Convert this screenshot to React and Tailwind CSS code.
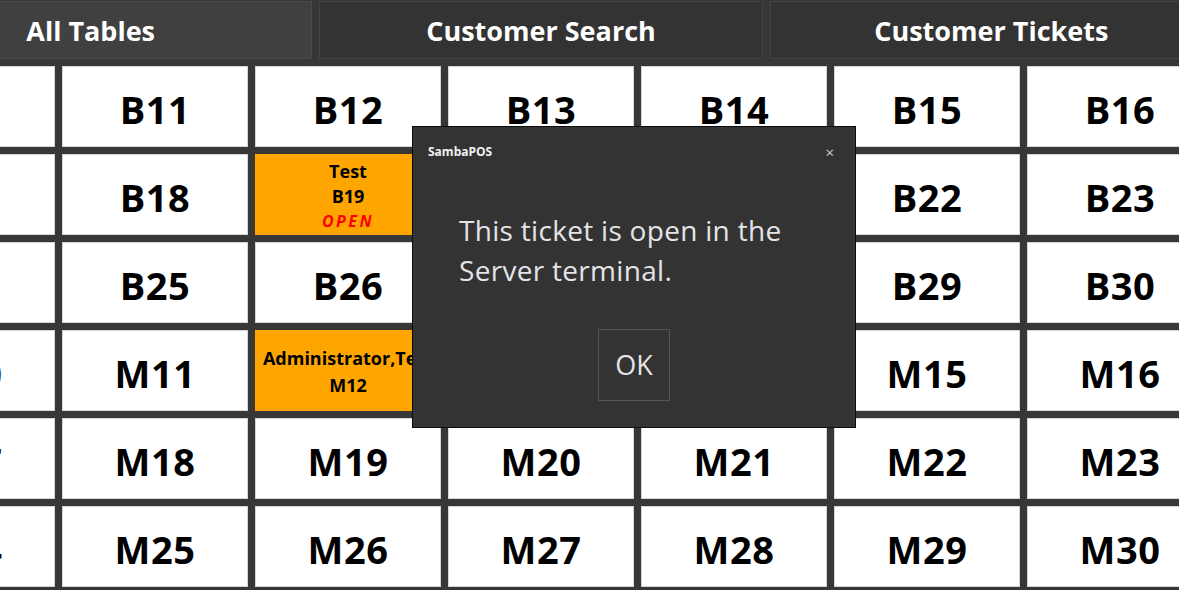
import React from "react";

const rows = [
  ["B10", "B11", "B12", "B13", "B14", "B15", "B16"],
  ["B17", "B18", "B19", "B20", "B21", "B22", "B23"],
  ["B24", "B25", "B26", "B27", "B28", "B29", "B30"],
  ["M10", "M11", "M12", "M13", "M14", "M15", "M16"],
  ["M17", "M18", "M19", "M20", "M21", "M22", "M23"],
  ["M24", "M25", "M26", "M27", "M28", "M29", "M30"],
];

const font = { fontFamily: '"Open Sans", "Noto Sans", sans-serif' };

function Cell({ name }) {
  if (name === "B19") {
    return (
      <div className="h-[81px] bg-[#ffa500] flex flex-col items-center justify-center text-black font-bold leading-[25px] pt-[4px]">
        <div className="text-[18px]">Test</div>
        <div className="text-[18px]">B19</div>
        <div className="text-[16px] italic text-[#ff0000] tracking-[2.5px]">OPEN</div>
      </div>
    );
  }
  if (name === "M12") {
    return (
      <div className="h-[81px] bg-[#ffa500] flex flex-col items-center justify-center text-black font-bold leading-[27px] overflow-hidden whitespace-nowrap pt-[2px]">
        <div className="text-[18px]">Administrator,Test</div>
        <div className="text-[18px]">M12</div>
      </div>
    );
  }
  return (
    <div className="h-[81px] bg-white border border-[#d6d6d6] flex items-center justify-center overflow-hidden whitespace-nowrap">
      <span className="text-[38px] font-bold text-black leading-none pt-[4px] tracking-[0.5px]">{name}</span>
    </div>
  );
}

export default function App() {
  return (
    <div className="relative w-[1179px] h-[590px] overflow-hidden bg-[#373737]" style={font}>
      <div className="ml-[-131px] w-[1344px]">
        <div className="grid grid-cols-3 gap-[7px] pt-px">
          <div className="h-[58px] bg-[#404040] border border-[#4b4b4b] flex items-center justify-center text-white font-bold text-[27px] pt-[3px]">
            All Tables
          </div>
          <div className="h-[58px] bg-[#333333] border border-[#444444] flex items-center justify-center text-white font-bold text-[27px] pt-[3px]">
            Customer Search
          </div>
          <div className="h-[58px] bg-[#333333] border border-[#444444] flex items-center justify-center text-white font-bold text-[27px] pt-[3px]">
            Customer Tickets
          </div>
        </div>
        <div className="grid grid-cols-7 gap-[7px] mt-[7px]">
          {rows.flat().map((n) => (
            <Cell key={n} name={n} />
          ))}
        </div>
      </div>

      <div className="absolute left-[412px] top-[126px] w-[444px] h-[302px] bg-[#333333] border border-[#0d0d0d] flex flex-col">
        <div className="flex items-center justify-between pl-[15px] pr-[21px] pt-[16px]">
          <span className="text-[12px] font-bold text-[#f2f2f2]">SambaPOS</span>
          <span className="text-[15px] text-[#cfcfcf] leading-none">×</span>
        </div>
        <div className="pl-[46px] pt-[49px] text-[28px] leading-[40px] tracking-[0.3px] text-[#e4e4e8]">
          <div>This ticket is open in the</div>
          <div>Server terminal.</div>
        </div>
        <div className="flex justify-center mt-[39px]">
          <div className="w-[72px] h-[72px] border border-[#555555] flex items-center justify-center text-[27px] text-[#e4e4e8]">
            OK
          </div>
        </div>
      </div>
    </div>
  );
}
